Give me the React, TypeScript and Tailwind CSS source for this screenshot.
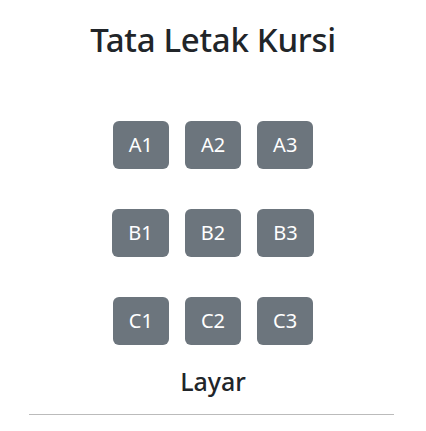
const rows = [
  ["A1", "A2", "A3"],
  ["B1", "B2", "B3"],
  ["C1", "C2", "C3"],
];

const Seat = ({ label }: { label: string }) => (
  <button className="h-12 rounded-md bg-[#6c757d] px-4 text-[20px] leading-6 text-white">{label}</button>
);

export default function App() {
  return (
    <div className="min-h-[431px] bg-white font-['Noto_Sans',sans-serif] text-[#212529]">
      <div className="flex flex-col items-center pt-[18px]">
        <h1 className="text-[33px] leading-[43px] font-medium tracking-[-0.3px]">Tata Letak Kursi</h1>

        {/* seats */}
        <div className="mt-[60px] flex flex-col items-center gap-10">
          {rows.map((row) => (
            <div key={row[0]} className="flex gap-4">
              {row.map((s) => (
                <Seat key={s} label={s} />
              ))}
            </div>
          ))}
        </div>

        <p className="mt-[20px] text-[25px] leading-[32px] font-medium">Layar</p>
      </div>
      <hr className="mx-[29px] mt-[17px] w-[365px] border-t border-[#bbbbbb]" />
    </div>
  );
}
